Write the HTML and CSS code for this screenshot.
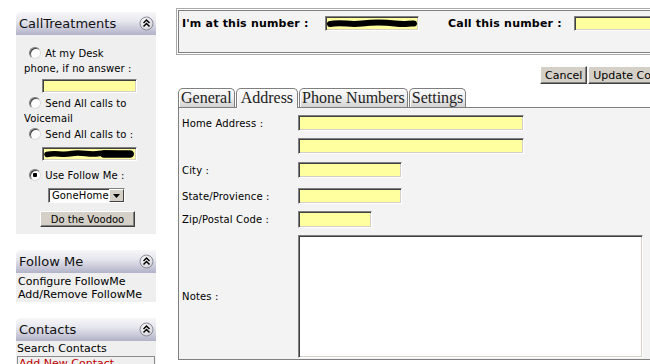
FILE: index.html
```html
<!DOCTYPE html>
<html>
<head>
<meta charset="utf-8">
<link rel="stylesheet" href="styles.css">
</head>
<body>
<div class="page">
  <aside class="sidebar">
    <section class="panel">
      <div class="panel-head"><span>CallTreatments</span><span class="collapse"><svg width="15" height="15" viewBox="0 0 15 15"><defs><radialGradient id="g1" cx="0.4" cy="0.35" r="0.7"><stop offset="0" stop-color="#ffffff"/><stop offset="1" stop-color="#d0d0d8"/></radialGradient></defs><circle cx="7.5" cy="7.5" r="6.5" fill="url(#g1)" stroke="#8a8a98"/><polyline points="4.5,7 7.5,4 10.5,7" fill="none" stroke="#000" stroke-width="1.5"/><polyline points="4.5,10.5 7.5,7.5 10.5,10.5" fill="none" stroke="#000" stroke-width="1.5"/></svg></span></div>
      <div class="panel-body ct">
        <div class="opt"><input type="radio" name="ct" class="radio"> At my Desk<br>phone, if no answer :</div>
        <div class="field yellow side-field"></div>
        <div class="opt opt2"><input type="radio" name="ct" class="radio"> Send All calls to<br>Voicemail</div>
        <div class="opt opt3"><input type="radio" name="ct" class="radio"> Send All calls to :</div>
        <div class="field yellow side-field side-red"><svg width="91" height="10" viewBox="0 0 91 10"><path d="M3 5.5 C 12 3.5, 18 6.5, 28 4.5 S 45 6.5, 55 4.5 S 75 6, 87 5" fill="none" stroke="#000" stroke-width="5.5" stroke-linecap="round"/><path d="M60 5 L 86 5" stroke="#000" stroke-width="7.5" stroke-linecap="round"/></svg></div>
        <div class="opt opt4"><input type="radio" name="ct" class="radio" checked> Use Follow Me :</div>
        <div class="select"><span class="select-text">GoneHome</span><span class="select-arrow"><svg width="7" height="4" viewBox="0 0 7 4"><polygon points="0,0 7,0 3.5,4" fill="#000"/></svg></span></div>
        <button class="btn voodoo">Do the Voodoo</button>
      </div>
    </section>
    <section class="panel">
      <div class="panel-head"><span>Follow Me</span><span class="collapse"><svg width="15" height="15" viewBox="0 0 15 15"><circle cx="7.5" cy="7.5" r="6.5" fill="url(#g1)" stroke="#8a8a98"/><polyline points="4.5,7 7.5,4 10.5,7" fill="none" stroke="#000" stroke-width="1.5"/><polyline points="4.5,10.5 7.5,7.5 10.5,10.5" fill="none" stroke="#000" stroke-width="1.5"/></svg></span></div>
      <div class="panel-body links">
        <div>Configure FollowMe</div>
        <div>Add/Remove FollowMe</div>
      </div>
    </section>
    <section class="panel">
      <div class="panel-head"><span>Contacts</span><span class="collapse"><svg width="15" height="15" viewBox="0 0 15 15"><circle cx="7.5" cy="7.5" r="6.5" fill="url(#g1)" stroke="#8a8a98"/><polyline points="4.5,7 7.5,4 10.5,7" fill="none" stroke="#000" stroke-width="1.5"/><polyline points="4.5,10.5 7.5,7.5 10.5,10.5" fill="none" stroke="#000" stroke-width="1.5"/></svg></span></div>
      <div class="panel-body links contacts">
        <div>Search Contacts</div>
        <div class="active-link">Add New Contact</div>
      </div>
    </section>
  </aside>

  <main class="main">
    <div class="callbox">
      <span class="cb-label">I'm at this number :</span>
      <div class="field yellow cb-field"><svg width="90" height="11" viewBox="0 0 90 11"><path d="M3 6 C 15 4, 22 7, 35 5.5 S 55 4, 68 5.5 S 80 5, 87 5.5" fill="none" stroke="#000" stroke-width="6" stroke-linecap="round"/></svg></div>
      <span class="cb-label cb-label2">Call this number :</span>
      <div class="field yellow cb-field2"></div>
    </div>

    <div class="actions">
      <button class="btn act">Cancel</button>
      <button class="btn act">Update Contact</button>
    </div>

    <div class="tabs">
      <span class="tab">General</span>
      <span class="tab active">Address</span>
      <span class="tab">Phone Numbers</span>
      <span class="tab">Settings</span>
    </div>
    <div class="tabpanel">
      <div class="frow"><span class="flabel">Home Address :</span><div class="field yellow w-long"></div></div>
      <div class="frow"><span class="flabel"></span><div class="field yellow w-long"></div></div>
      <div class="frow"><span class="flabel">City :</span><div class="field yellow w-mid"></div></div>
      <div class="frow"><span class="flabel">State/Provience :</span><div class="field yellow w-mid"></div></div>
      <div class="frow"><span class="flabel">Zip/Postal Code :</span><div class="field yellow w-short"></div></div>
      <div class="frow"><span class="flabel">Notes :</span><div class="field notes"></div></div>
    </div>
  </main>
</div>
</body>
</html>
```

FILE: styles.css
```css
* { box-sizing: border-box; }
html, body { margin: 0; padding: 0; background: #fff; overflow: hidden; }
body {
  width: 650px;
  height: 364px;
  font-family: "DejaVu Sans", Verdana, sans-serif;
  color: #000;
}
.page { display: flex; align-items: flex-start; }

/* sidebar */
.sidebar {
  flex: none;
  width: 140px;
  margin-left: 16px;
  padding-top: 12px;
  display: flex;
  flex-direction: column;
  gap: 16px;
}
.panel-head {
  height: 23px;
  display: flex;
  align-items: center;
  justify-content: space-between;
  padding: 0 2px 0 3px;
  background: linear-gradient(#f7f7f9, #e6e6ee 40%, #b2b2c9);
  border-top-left-radius: 5px;
  font-size: 13px;
  color: #111;
}
.collapse svg { display: block; }
.panel-body { background: #efefef; }

.ct { padding: 11px 16px 7px 8px; font-size: 10px; line-height: 15px; letter-spacing: 0.1px; }
.opt { white-space: nowrap; }
.opt2 { margin-top: 3px; }
.opt3 { margin-top: 1px; }
.opt4 { margin-top: 7px; }
.radio {
  appearance: none;
  -webkit-appearance: none;
  width: 12px;
  height: 12px;
  margin: 0 1px 0 5px;
  vertical-align: -2px;
  border-radius: 50%;
  border: 1px solid;
  border-color: #7a7a7a #dcdcdc #dcdcdc #7a7a7a;
  background: #fff;
  box-shadow: inset 1px 1px 0 #404040;
}
.radio:checked {
  background: radial-gradient(circle at 50% 50%, #000 0 2px, #fff 2.5px);
}

.field {
  border: 1px solid;
  border-color: #808080 #fff #fff #808080;
  box-shadow: inset 1px 1px 0 #404040, inset -1px -1px 0 #d4d0c8;
}
.yellow { background: #ffffa0; }
.side-field { width: 95px; height: 14px; margin: 3px 0 0 18px; }
.side-red { margin-top: 5px; display: flex; align-items: center; padding-left: 1px; }
.side-red svg { display: block; }

.select {
  width: 77px;
  height: 15px;
  margin: 5px 0 0 24px;
  display: flex;
  background: #fff;
  border: 1px solid;
  border-color: #808080 #fff #fff #808080;
  box-shadow: inset 1px 1px 0 #404040;
  font-size: 10px;
  line-height: 13px;
}
.select-text { flex: 1; padding-left: 3px; }
.select-arrow {
  width: 15px;
  height: 13px;
  background: #d4d0c8;
  border: 1px solid;
  border-color: #fff #404040 #404040 #fff;
  display: flex;
  align-items: center;
  justify-content: center;
}
.select-arrow svg { display: block; }

.btn {
  font-family: "DejaVu Sans", Verdana, sans-serif;
  background: #d4d0c8;
  color: #000;
  border: 1px solid;
  border-color: #fff #404040 #404040 #fff;
  box-shadow: inset -1px -1px 0 #808080;
  padding: 0;
  margin: 0;
}
.voodoo {
  display: block;
  width: 95px;
  height: 16px;
  margin: 8px 0 0 16px;
  font-size: 10px;
  line-height: 13px;
}

.links { font-size: 11px; line-height: 13px; padding: 2px 0 1px 2px; }
.contacts { padding: 1px 0 0 1px; height: 40px; }
.active-link {
  color: #c00000;
  border: 1px solid #8c8c8c;
  margin-top: 1px;
  padding-left: 1px;
  margin-right: 1px;
}

/* main */
.main {
  flex: none;
  width: 540px;
  margin-left: 22px;
  padding-top: 10px;
}
.callbox {
  height: 43px;
  background: #f3f3f3;
  border: 1px solid #7f7f7f;
  box-shadow: 0 0 0 1px #fff, 0 0 0 2px #a9a9a9;
  display: flex;
  align-items: flex-start;
  padding: 5px 0 0 3px;
}
.cb-label {
  width: 143px;
  flex: none;
  font-weight: bold;
  font-size: 11px;
  line-height: 15px;
  letter-spacing: 0.2px;
  white-space: nowrap;
}
.cb-label2 { width: 126px; margin-left: 29px; }
.cb-field {
  width: 94px;
  height: 15px;
  flex: none;
  display: flex;
  align-items: center;
  padding-left: 1px;
}
.cb-field svg { display: block; }
.cb-field2 { width: 100px; height: 15px; flex: none; }

.actions {
  display: flex;
  gap: 1px;
  margin-top: 13px;
  padding-left: 362px;
}
.act {
  height: 18px;
  font-size: 11px;
  padding: 0 4px;
  white-space: nowrap;
}

.tabs {
  display: flex;
  gap: 1px;
  margin-top: 4px;
  height: 19px;
}
.tab {
  height: 19px;
  padding: 0 2px;
  border: 1px solid #7f7f7f;
  border-bottom: none;
  border-radius: 5px 5px 0 0;
  background: linear-gradient(#fbfbfb, #eeeeee 50%, #d2d2d2);
  box-shadow: inset 1px 1px 0 #fff;
  font-family: "Liberation Serif", "Times New Roman", serif;
  font-size: 16px;
  line-height: 18px;
  color: #222;
  white-space: nowrap;
}
.tab.active {
  position: relative;
  z-index: 1;
  height: 20px;
  padding: 0 4px;
  background: linear-gradient(#fbfbfb, #f3f3f3 60%);
}

.tabpanel {
  height: 253px;
  background: #f3f3f3;
  border: 1px solid #7f7f7f;
  padding: 7px 0 2px 3px;
  display: flex;
  flex-direction: column;
}
.frow { display: flex; align-items: center; }
.frow:nth-child(2) { margin-top: 7px; }
.frow:nth-child(3) { margin-top: 8px; }
.frow:nth-child(4) { margin-top: 10px; }
.frow:nth-child(5) { margin-top: 7px; }
.frow:nth-child(6) { margin-top: 7px; }
.flabel {
  width: 116px;
  flex: none;
  font-size: 10px;
  line-height: 13px;
  letter-spacing: 0.15px;
  white-space: nowrap;
}
.w-long { width: 226px; height: 16px; }
.w-mid { width: 104px; height: 16px; }
.w-short { width: 74px; height: 17px; }
.notes { width: 345px; height: 123px; background: #fff; }
```
